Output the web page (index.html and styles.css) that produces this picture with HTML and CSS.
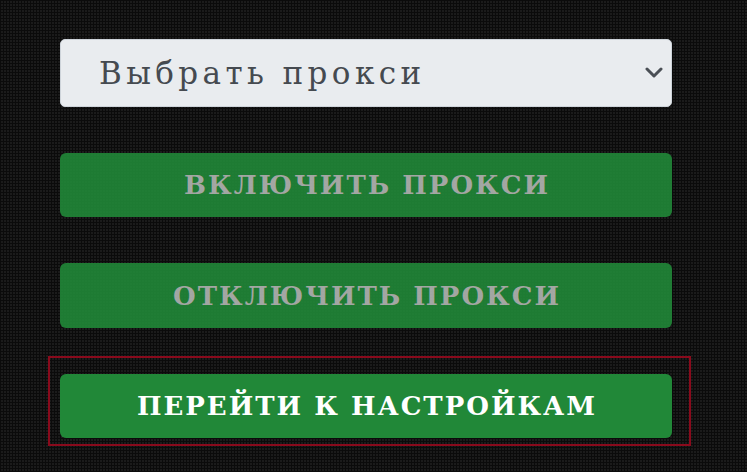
FILE: index.html
```html
<!DOCTYPE html>
<html lang="ru">
<head>
<meta charset="utf-8">
<link rel="stylesheet" href="styles.css">
</head>
<body>
<div class="panel">
  <div class="select-wrap">
    <select class="proxy-select">
      <option>Выбрать прокси</option>
    </select>
    <svg class="chevron" width="18" height="12" viewBox="0 0 18 12"><path d="M2 2 L9 9 L16 2" fill="none" stroke="#4a4f55" stroke-width="3" stroke-linecap="round" stroke-linejoin="round"/></svg>
  </div>
  <button class="btn btn-disabled" disabled>ВКЛЮЧИТЬ ПРОКСИ</button>
  <button class="btn btn-disabled btn-tall" disabled>ОТКЛЮЧИТЬ ПРОКСИ</button>
  <div class="focus-box">
    <button class="btn">ПЕРЕЙТИ К НАСТРОЙКАМ</button>
  </div>
</div>
</body>
</html>
```
FILE: styles.css
```css
html, body {
  margin: 0;
  padding: 0;
  height: 100%;
}
body {
  background-color: #1b1b1b;
  background-image:
    repeating-linear-gradient(90deg, #0b0b0b 0px, #0b0b0b 1px, transparent 1px, transparent 3px),
    repeating-linear-gradient(0deg, #0b0b0b 0px, #0b0b0b 1px, transparent 1px, transparent 3px);
  font-family: "DejaVu Serif", "Liberation Serif", serif;
}
.panel {
  display: flex;
  flex-direction: column;
  gap: 46px;
  width: 612px;
  padding: 39px 0 0 60px;
}
.select-wrap {
  position: relative;
  height: 68px;
}
.proxy-select {
  appearance: none;
  -webkit-appearance: none;
  width: 100%;
  height: 68px;
  margin: 0;
  border: 1px solid #ced4da;
  border-radius: 5px;
  background: #e9ecef;
  color: #454a50;
  font-family: "DejaVu Serif", "Liberation Serif", serif;
  font-size: 31px;
  letter-spacing: 4.4px;
  padding: 0 0 0 38px;
  outline: none;
}
.chevron {
  position: absolute;
  right: 9px;
  top: 28px;
}
.btn {
  display: block;
  width: 612px;
  height: 64px;
  margin: 0;
  border: none;
  border-radius: 6px;
  background: #218838;
  color: #ffffff;
  font-family: "DejaVu Serif", "Liberation Serif", serif;
  font-weight: bold;
  font-size: 26px;
  letter-spacing: 2px;
  text-indent: 2px;
  padding: 0;
  text-align: center;
}
.btn-disabled {
  opacity: 0.9;
  color: #b3b7b3;
}
.btn-tall {
  height: 65px;
}
.focus-box {
  margin: -18px 0 0 -12px;
  width: 612px;
  padding: 16px 17px 6px 10px;
  border: 2px solid #8a0a1c;
}
```
